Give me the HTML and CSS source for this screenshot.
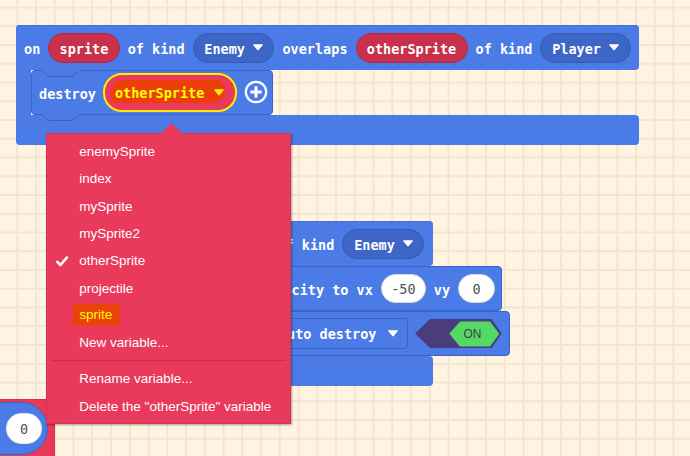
FILE: index.html
```html
<!DOCTYPE html>
<html>
<head>
<meta charset="utf-8">
<link rel="stylesheet" href="styles.css">
</head>
<body>
<div class="canvas">

  <!-- second event (partly hidden under the menu) -->
  <div class="event event-b">
    <div class="head head-b">
      <span class="t">on created sprite of kind</span>
      <div class="pill dd dd-enemy2"><span class="t">Enemy</span><svg class="caret" width="10" height="7" viewBox="0 0 10 7"><path d="M0.5 0.8h9L5 6.2z" fill="#fff" stroke="#fff" stroke-width="1" stroke-linejoin="round"/></svg></div>
    </div>
    <div class="row">
      <div class="arm"></div>
      <div class="stmt stmt-vel">
        <span class="t">set sprite velocity to vx</span>
        <div class="num num-a">-50</div>
        <span class="t">vy</span>
        <div class="num num-b">0</div>
      </div>
    </div>
    <div class="row">
      <div class="arm"></div>
      <div class="stmt stmt-auto">
        <div class="ddrect"><span class="t">set sprite auto destroy</span><svg class="caret" width="10" height="7" viewBox="0 0 10 7"><path d="M0.5 0.8h9L5 6.2z" fill="#fff" stroke="#fff" stroke-width="1" stroke-linejoin="round"/></svg></div>
        <svg class="toggle" width="87" height="30" viewBox="0 0 87 30">
          <path d="M0 14.5 L15 0 H76.7 L86.7 14.5 L76.7 29 H15 Z" fill="#4b3d7d"/>
          <path d="M34.3 14.7 L45 2.4 H75 L84.3 14.7 L75 27.4 H45 Z" fill="#55d866"/>
          <text x="57.5" y="18.8" text-anchor="middle" class="on-txt">ON</text>
        </svg>
      </div>
    </div>
    <div class="foot foot-b"></div>
  </div>

  <!-- main event -->
  <div class="event event-a">
    <div class="head head-a">
      <span class="t">on</span>
      <div class="pill var"><span class="t">sprite</span></div>
      <span class="t">of kind</span>
      <div class="pill dd"><span class="t">Enemy</span><svg class="caret" width="10" height="7" viewBox="0 0 10 7"><path d="M0.5 0.8h9L5 6.2z" fill="#fff" stroke="#fff" stroke-width="1" stroke-linejoin="round"/></svg></div>
      <span class="t">overlaps</span>
      <div class="pill var"><span class="t">otherSprite</span></div>
      <span class="t">of kind</span>
      <div class="pill dd"><span class="t">Player</span><svg class="caret" width="10" height="7" viewBox="0 0 10 7"><path d="M0.5 0.8h9L5 6.2z" fill="#fff" stroke="#fff" stroke-width="1" stroke-linejoin="round"/></svg></div>
    </div>
    <div class="row mid-a">
      <div class="arm"></div>
      <div class="stmt stmt-destroy">
        <svg class="notch notch-top" width="36" height="8" viewBox="0 0 36 8"><rect x="0" y="0" width="36" height="2" fill="#4b7be6"/><path d="M0 1.5 L5.5 6.5 H29.5 L35 1.5" fill="#4b7be6" stroke="#3b63c4" stroke-width="1"/></svg>
        <span class="t">destroy</span>
        <div class="hl-dd">
          <span class="scribble"></span>
          <span class="t hl-t">otherSprite</span>
          <svg class="caret hl-caret" width="10" height="7" viewBox="0 0 10 7"><path d="M0.5 0.8h9L5 6.2z" fill="#ffee00" stroke="#ffee00" stroke-width="1" stroke-linejoin="round"/></svg>
        </div>
        <svg class="plus" width="24" height="24" viewBox="0 0 24 24"><circle cx="12" cy="12" r="10.2" fill="none" stroke="#fff" stroke-width="2.2"/><path d="M12 6.3v11.4M6.3 12h11.4" stroke="#fff" stroke-width="3"/></svg>
        <svg class="notch notch-bot" width="36" height="8" viewBox="0 0 36 8"><rect x="0" y="0" width="36" height="2" fill="#4b7be6"/><path d="M0 1.5 L5.5 6.5 H29.5 L35 1.5" fill="#4b7be6" stroke="#3b63c4" stroke-width="1"/></svg>
      </div>
    </div>
    <div class="foot foot-a"></div>
  </div>

  <!-- bottom-left block -->
  <div class="redblock">
    <div class="reporter">
      <div class="num num-c">0</div>
    </div>
  </div>

  <!-- dropdown menu -->
  <div class="menu">
    <div class="menu-arrow"></div>
    <div class="mi">enemySprite</div>
    <div class="mi">index</div>
    <div class="mi">mySprite</div>
    <div class="mi">mySprite2</div>
    <div class="mi"><svg class="check" width="12" height="11" viewBox="0 0 12 11"><path d="M1.3 5.8 L4.5 9 L10.8 1.6" fill="none" stroke="#fff" stroke-width="2.6" stroke-linecap="round" stroke-linejoin="round"/></svg>otherSprite</div>
    <div class="mi">projectile</div>
    <div class="mi"><span class="mark">sprite</span></div>
    <div class="mi">New variable...</div>
    <div class="sep"></div>
    <div class="mi">Rename variable...</div>
    <div class="mi">Delete the "otherSprite" variable</div>
  </div>

</div>
</body>
</html>
```

FILE: styles.css
```css
* { box-sizing: border-box; }

html, body {
  margin: 0;
  padding: 0;
}

body {
  width: 690px;
  height: 456px;
  overflow: hidden;
  background-color: #fff3e2;
  background-image:
    linear-gradient(to right, #f5e5cf 0, #f5e5cf 1.6px, transparent 1.6px),
    linear-gradient(to bottom, #f5e5cf 0, #f5e5cf 1.6px, transparent 1.6px);
  background-size: 18.75px 18.75px;
  background-position: 16.3px 6.5px;
  font-family: "DejaVu Sans Mono", monospace;
}

.canvas {
  position: relative;
  width: 690px;
  height: 456px;
  overflow: hidden;
}

/* ---------- blocks ---------- */
.event {
  position: absolute;
  display: flex;
  flex-direction: column;
}

.event-a { left: 16px; top: 25px; z-index: 2; }
.event-b { left: 170px; top: 221px; z-index: 1; }

.t {
  font-family: "DejaVu Sans Mono", monospace;
  font-weight: bold;
  font-size: 13.5px;
  line-height: 16px;
  color: #fff;
  white-space: pre;
  position: relative;
  top: 1px;
}

.head {
  height: 45px;
  background: #4b7be6;
  border-radius: 4px 4px 4px 0;
  display: flex;
  align-items: center;
  gap: 8px;
  padding: 0 8px;
  box-shadow: inset 0 1px 0 #4270d8;
}

.head-a { width: 623.3px; }
.head-b { width: 262.7px; justify-content: flex-end; padding-right: 8.4px; }

.row { display: flex; }
.mid-a { position: relative; z-index: 2; }

.arm {
  width: 15px;
  height: 45px;
  background: #4b7be6;
}

.foot {
  height: 30px;
  background: #4b7be6;
  border-radius: 0 4px 4px 4px;
}
.foot-a { width: 623.3px; }
.foot-b { width: 262.7px; height: 29.5px; }

.pill {
  height: 30px;
  border-radius: 15px;
  display: flex;
  align-items: center;
  gap: 8px;
  flex-shrink: 0;
}

.var {
  background: #c9304b;
  border: 1px solid #b02841;
  padding: 0 10.3px;
}

.dd {
  background: #3e66c6;
  border: 1px solid #3559b2;
  padding: 0 10.5px 0 10.8px;
}

.caret { display: block; flex-shrink: 0; }

.stmt {
  position: relative;
  height: 45px;
  background: #4b7be6;
  border: 1px solid #3b63c4;
  border-radius: 4px;
  display: flex;
  align-items: center;
}

.stmt-destroy {
  width: 242px;
  padding: 0 6px 0 7px;
  gap: 7px;
}

.notch { position: absolute; display: block; }
.notch-top { left: 10.5px; top: -1.5px; }
.notch-bot { left: 10.5px; bottom: -7.5px; }

.hl-dd {
  position: relative;
  width: 134px;
  height: 38.4px;
  border: 2px solid #ffee00;
  border-radius: 19px;
  background: #ea3a5b;
  display: flex;
  align-items: center;
  padding: 0 12px 0 10px;
  gap: 10px;
  flex-shrink: 0;
}

.scribble {
  position: absolute;
  left: 6px;
  top: 5px;
  right: 10px;
  bottom: 7px;
  background: #ec3e08;
  border-radius: 14px 10px 16px 8px;
}

.hl-t { color: #ffff00; }
.hl-caret { position: relative; }

.plus { display: block; flex-shrink: 0; margin-top: -1px; }

.stmt-vel {
  width: 317.3px;
  justify-content: flex-end;
  padding-right: 6.5px;
  gap: 8px;
}

.stmt-auto {
  width: 325px;
  justify-content: flex-end;
  padding-right: 7.5px;
  gap: 7px;
}

.num {
  height: 29px;
  background: #fff;
  border: 1px solid #dcdcdc;
  border-radius: 15px;
  display: flex;
  align-items: center;
  justify-content: center;
  font-family: "DejaVu Sans Mono", monospace;
  font-size: 13.5px;
  color: #505050;
  flex-shrink: 0;
}
.num-a { width: 45px; }
.num-b { width: 36.7px; }

.ddrect {
  height: 30.4px;
  border: 1px solid #3a61c2;
  border-radius: 4px;
  display: flex;
  align-items: center;
  gap: 11px;
  padding: 0 9px 0 8px;
  flex-shrink: 0;
}

.toggle { display: block; flex-shrink: 0; }
.on-txt {
  font-family: "Liberation Sans Narrow", "Liberation Sans", sans-serif;
  font-size: 12px;
  fill: #3f3f3f;
}

/* ---------- bottom-left block ---------- */
.redblock {
  position: absolute;
  left: -60px;
  top: 399px;
  width: 115px;
  height: 70px;
  background: #e83a58;
  border: 1px solid #cf3150;
  border-radius: 4px;
  display: flex;
  justify-content: flex-end;
  align-items: flex-start;
  padding: 2px 6px 0 0;
  z-index: 1;
}

.reporter {
  width: 89px;
  height: 53px;
  background: #4b7be6;
  border: 1px solid #3b63c4;
  border-radius: 26.5px;
  display: flex;
  justify-content: flex-end;
  align-items: center;
  padding-right: 4.7px;
}

.num-c {
  width: 36.6px;
  height: 30.7px;
  font-weight: normal;
  border-color: #e6e6e6;
}

/* ---------- dropdown menu ---------- */
.menu {
  position: absolute;
  left: 46px;
  top: 133px;
  width: 245px;
  height: 291px;
  background: #ea3a5b;
  border: 1px solid #d63352;
  box-shadow: 1px 1px 2px rgba(0, 0, 0, 0.35);
  padding: 4px 0;
  z-index: 5;
  font-family: "Liberation Sans", Arial, sans-serif;
  font-size: 13.5px;
  color: #fff;
}

.menu-arrow {
  position: absolute;
  left: 113px;
  top: -11px;
  width: 23px;
  height: 11px;
  background: #ea3a5b;
  clip-path: polygon(50% 0, 100% 100%, 0 100%);
}

.mi {
  position: relative;
  height: 27.3px;
  display: flex;
  align-items: center;
  padding-left: 32.3px;
  white-space: nowrap;
}

.check {
  position: absolute;
  left: 9px;
  top: 8.5px;
  display: block;
}

.mark {
  display: inline-block;
  background: #e9420a;
  color: #ffff00;
  line-height: 16px;
  padding: 3px 7.7px 3px 6px;
  margin-left: -6px;
  border-radius: 1px;
}

.sep {
  height: 1px;
  margin: 3.8px 4px 4px 4px;
  background: #c92f4b;
}
```
